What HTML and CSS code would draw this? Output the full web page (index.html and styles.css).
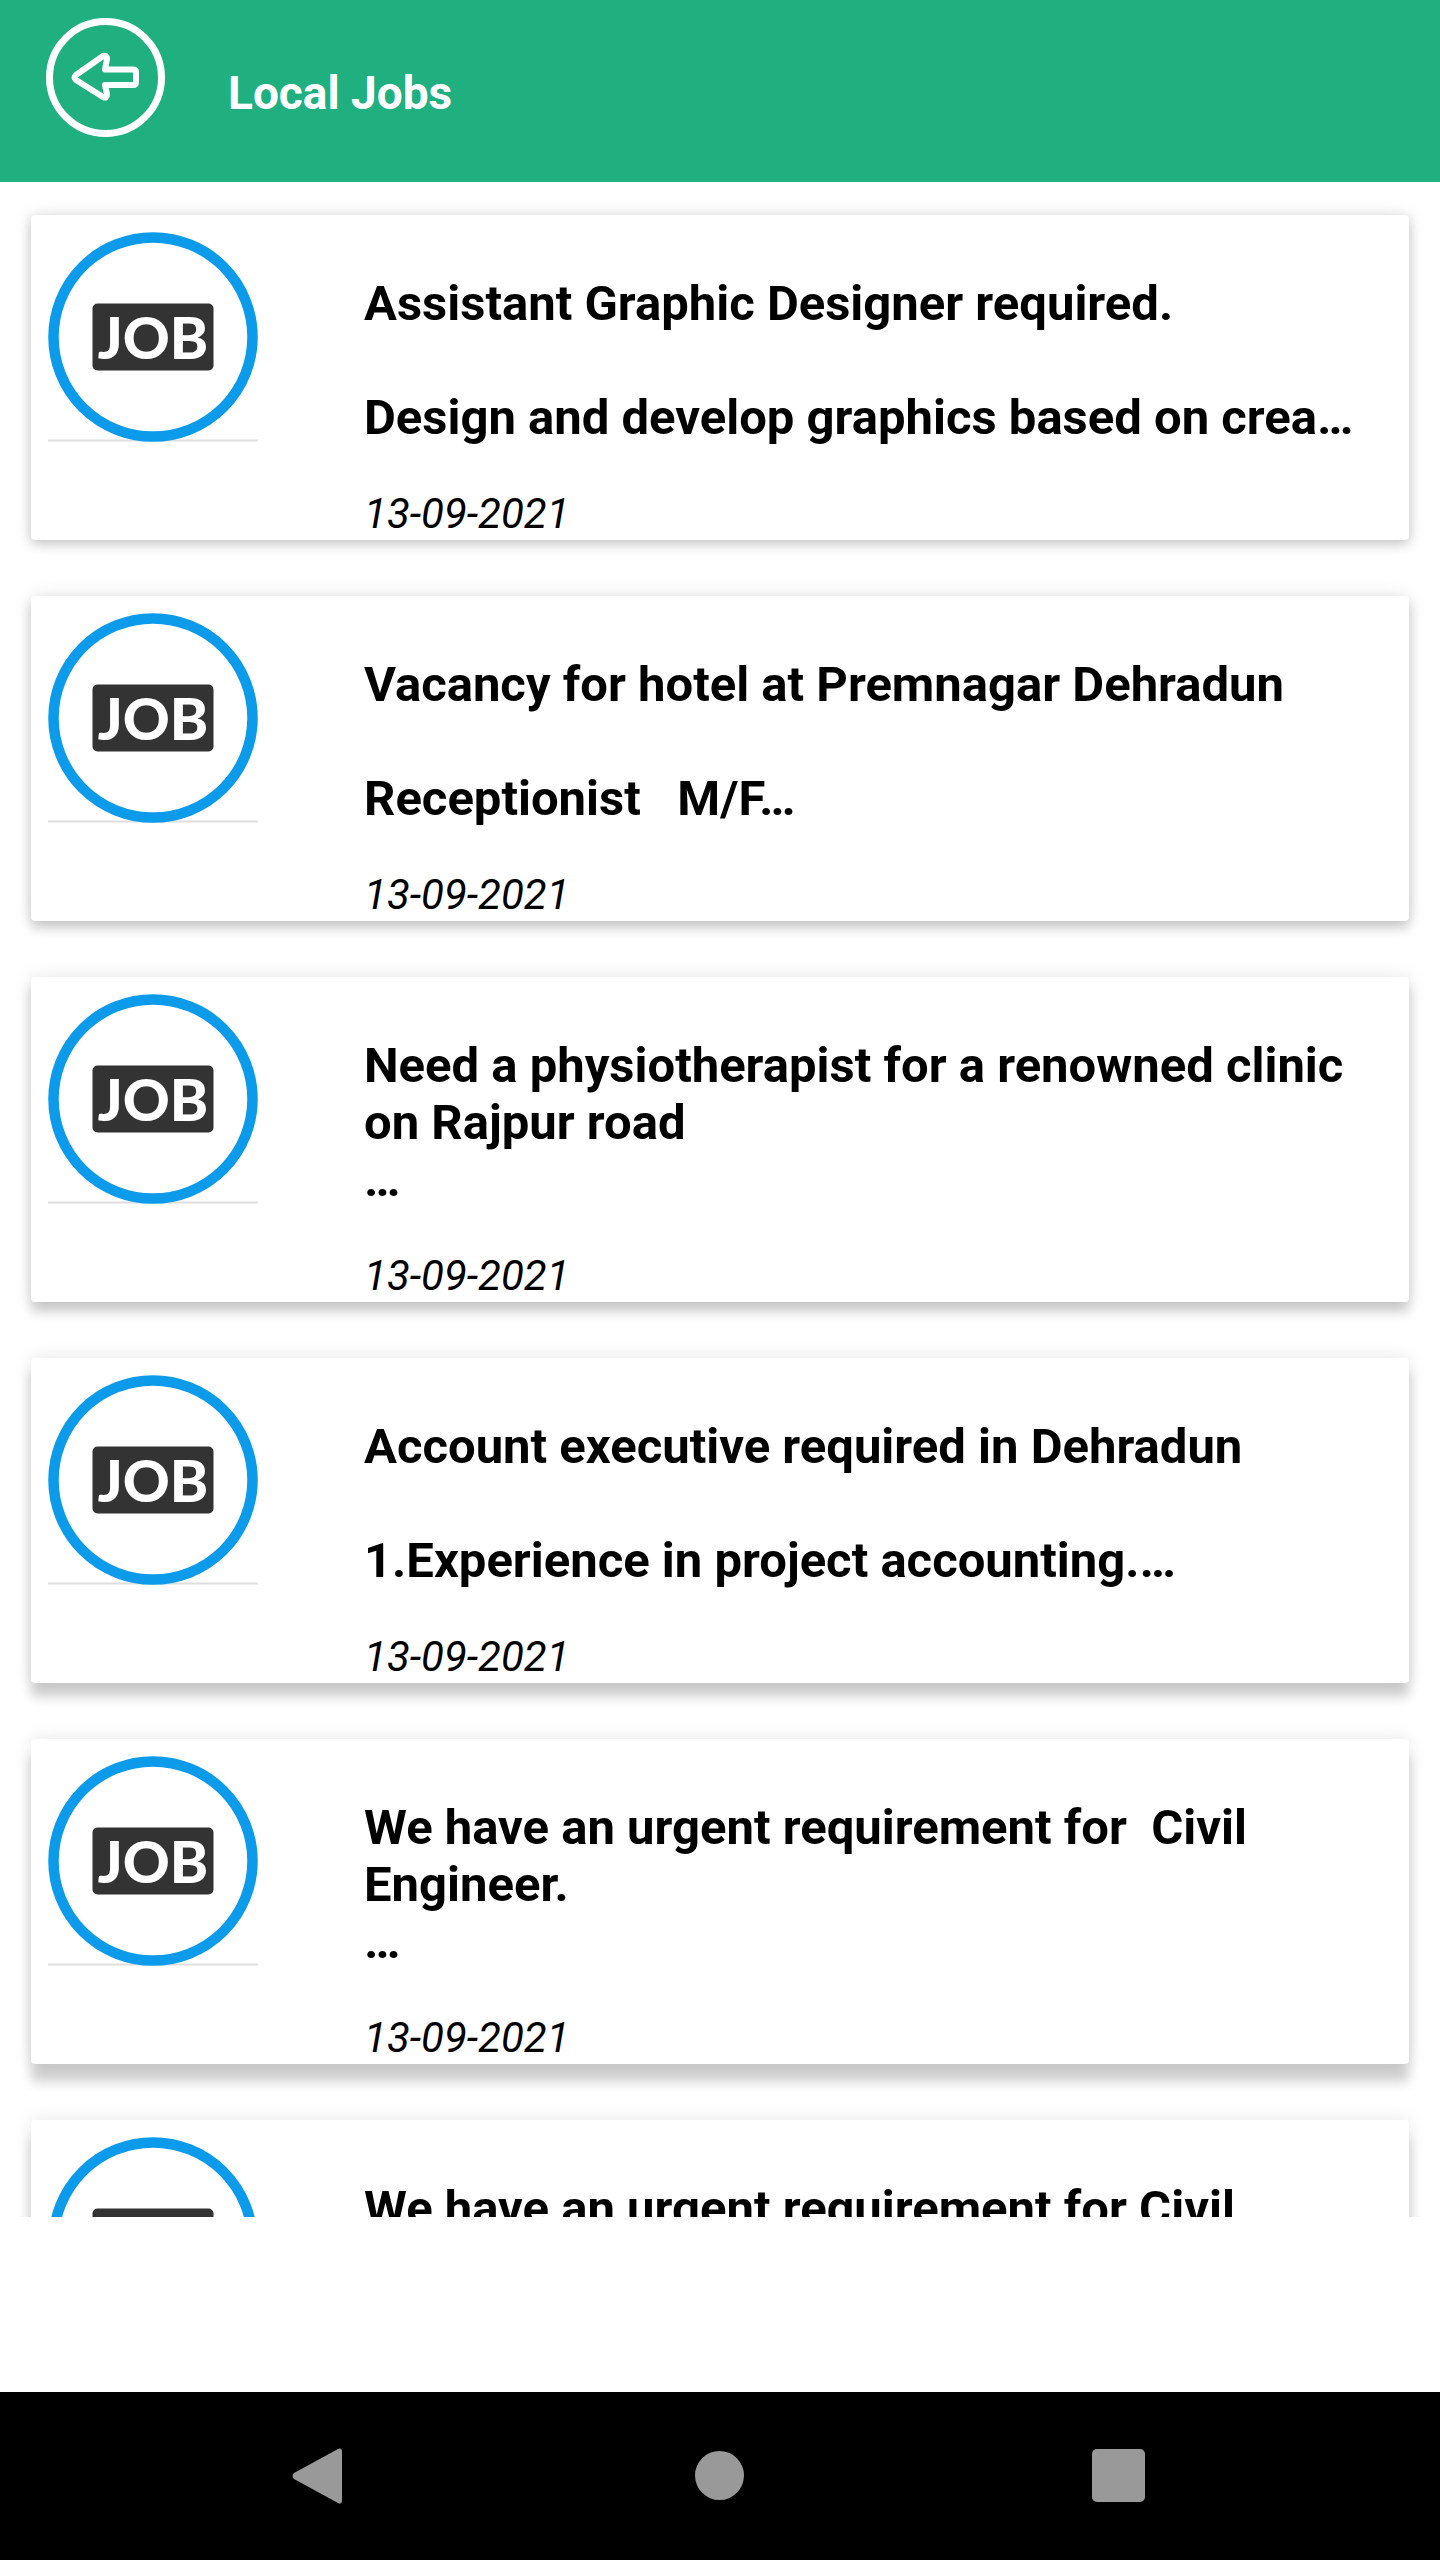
FILE: index.html
```html
<!DOCTYPE html>
<html lang="en">
<head>
<meta charset="utf-8">
<meta name="viewport" content="width=device-width, initial-scale=1">
<title>Local Jobs</title>
<link rel="stylesheet" href="styles.css">
</head>
<body>
<svg class="defs" aria-hidden="true">
  <symbol id="job" viewBox="0 0 210 210">
    <path d="M0 208.500H210" stroke="#dedede" stroke-width="2"/>
    <circle cx="105" cy="105" r="99.500" fill="#fff" stroke="#0c9bea" stroke-width="10.500"/>
    <rect x="44.500" y="71.500" width="121" height="67" rx="5" fill="#333"/>
    <text class="job-label" x="105" y="127" text-anchor="middle">JOB</text>
  </symbol>
</svg>
<header class="topbar">
  <button class="back" type="button" aria-label="Back">
    <svg viewBox="0 0 119 119" width="119" height="119" fill="none" stroke="#fff">
      <circle cx="59.500" cy="59.500" r="56" stroke-width="7"/>
      <path d="M30 57L57 38Q61 37 61 41L59 51.500H87Q90 51.500 90 54V64Q90 67 87 67H59L61 76Q61 81 57 79L30 62Q27 59.500 30 57Z" stroke-width="6" stroke-linejoin="round"/>
    </svg>
  </button>
  <h1 class="title">Local Jobs</h1>
</header>
<main class="jobs">
  <article class="card">
    <svg class="badge" role="img" aria-label="Job"><use href="#job"/></svg>
    <div class="info">
      <h2 class="summary">Assistant Graphic Designer required.

Design and develop graphics based on crea…</h2>
      <time class="date" datetime="2021-09-13">13-09-2021</time>
    </div>
  </article>
  <article class="card">
    <svg class="badge" role="img" aria-label="Job"><use href="#job"/></svg>
    <div class="info">
      <h2 class="summary">Vacancy for hotel at Premnagar Dehradun

Receptionist   M/F…</h2>
      <time class="date" datetime="2021-09-13">13-09-2021</time>
    </div>
  </article>
  <article class="card">
    <svg class="badge" role="img" aria-label="Job"><use href="#job"/></svg>
    <div class="info">
      <h2 class="summary">Need a physiotherapist for a renowned clinic on Rajpur road
…</h2>
      <time class="date" datetime="2021-09-13">13-09-2021</time>
    </div>
  </article>
  <article class="card">
    <svg class="badge" role="img" aria-label="Job"><use href="#job"/></svg>
    <div class="info">
      <h2 class="summary">Account executive required in Dehradun

1.Experience in project accounting.…</h2>
      <time class="date" datetime="2021-09-13">13-09-2021</time>
    </div>
  </article>
  <article class="card">
    <svg class="badge" role="img" aria-label="Job"><use href="#job"/></svg>
    <div class="info">
      <h2 class="summary">We have an urgent requirement for  Civil Engineer.
…</h2>
      <time class="date" datetime="2021-09-13">13-09-2021</time>
    </div>
  </article>
  <article class="card">
    <svg class="badge" role="img" aria-label="Job"><use href="#job"/></svg>
    <div class="info">
      <h2 class="summary">We have an urgent requirement for Civil</h2>
    </div>
  </article>
</main>
<nav class="navbar" aria-label="System">
  <button class="key" type="button" aria-label="Back">
    <svg viewBox="0 0 56 56" width="56" height="56"><path d="M2 25L46 1Q50 -1 50 4V52Q50 57 46 55L2 31Q-1 28 2 25Z" fill="#999"/></svg>
  </button>
  <button class="key" type="button" aria-label="Home">
    <svg viewBox="0 0 56 56" width="56" height="56"><circle cx="27.500" cy="27.500" r="24.500" fill="#999"/></svg>
  </button>
  <button class="key" type="button" aria-label="Recent apps">
    <svg viewBox="0 0 56 56" width="56" height="56"><rect x="0" y="1" width="53" height="53" rx="5" fill="#999"/></svg>
  </button>
</nav>
</body>
</html>
```
FILE: styles.css
```css
* {
  box-sizing: border-box;
}

body {
  display: flex;
  flex-direction: column;
  height: 100vh;
  margin: 0;
  background: #fff;
  color: #000;
  font-family: Roboto, "Liberation Sans", sans-serif;
}

button {
  padding: 0;
  border: 0;
  background: none;
  cursor: pointer;
}

.defs {
  position: absolute;
  width: 0;
  height: 0;
}

.job-label {
  fill: #fff;
  font-family: Lato, sans-serif;
  font-size: 58px;
  font-weight: 900;
}

.topbar {
  display: flex;
  flex: none;
  align-items: flex-start;
  gap: 63px;
  padding: 18px 46px 45px;
  background: #20b080;
}

.back svg,
.key svg {
  display: block;
}

.title {
  margin: 0;
  padding-top: 48px;
  color: #fff;
  font-size: 46px;
  font-weight: 700;
  line-height: 54px;
}

.jobs {
  display: flex;
  flex: 1;
  flex-direction: column;
  gap: 56px;
  min-height: 0;
  margin-bottom: 175px;
  padding: 33px 31px 0;
  overflow: hidden;
}

.card {
  --drop: 4px;
  display: flex;
  flex: none;
  gap: 106px;
  padding: 17px 50px 2px 17px;
  border-radius: 4px;
  background: #fff;
  box-shadow: 0 var(--drop) 12px rgba(0, 0, 0, 0.18), 0 0 18px rgba(0, 0, 0, 0.1);
}

.card:nth-child(2) {
  --drop: 7px;
}

.card:nth-child(3) {
  --drop: 10px;
}

.card:nth-child(4) {
  --drop: 14px;
}

.card:nth-child(n + 5) {
  --drop: 18px;
}

.badge {
  flex: none;
  width: 210px;
  height: 210px;
}

.info {
  flex: 1;
  min-width: 0;
  padding-top: 43px;
}

.summary {
  min-height: 171px;
  margin: 0 0 43px;
  font-size: 49px;
  font-weight: 700;
  line-height: 57px;
  white-space: pre-wrap;
}

.date {
  display: block;
  font-size: 42px;
  font-style: italic;
  line-height: 49px;
}

.navbar {
  display: grid;
  flex: none;
  grid-template-columns: repeat(3, 1fr);
  height: 168px;
  padding: 0 120px;
  background: #000;
}

.key {
  display: grid;
  place-items: center;
}
```
